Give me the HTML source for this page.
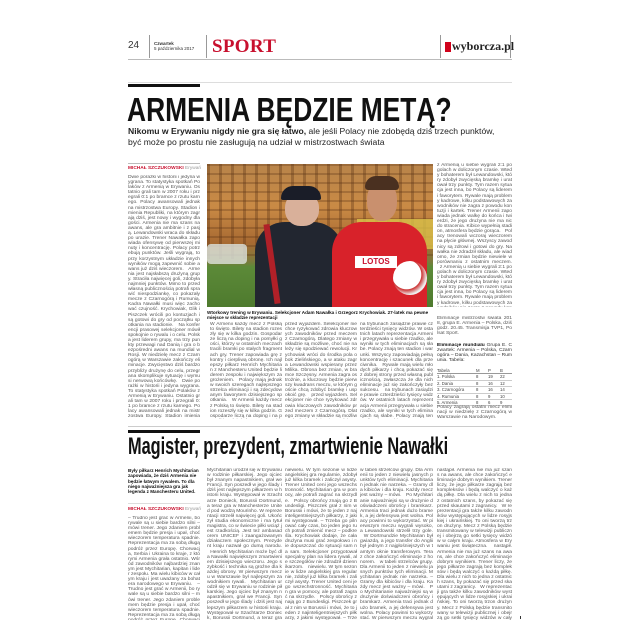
<!DOCTYPE html>
<html><head><meta charset="utf-8">
<style>
*{margin:0;padding:0;box-sizing:border-box}
body{width:640px;height:640px;background:#fff;position:relative;overflow:hidden;font-family:"Liberation Sans",sans-serif;color:#222}
.a{position:absolute}
.t{position:absolute;font-size:4.9px;line-height:5.1px;color:#555;overflow:hidden;text-align:justify;word-break:break-all}
.t b{color:#111}
.rule{position:absolute;background:#bbb;height:1px}
.vs{position:absolute;width:1px;background:#999}
</style></head><body>
<div class="a" style="left:128px;top:40px;font-size:10px;color:#333">24</div>
<div class="vs" style="left:149px;top:35px;height:23px"></div>
<div class="a" style="left:154px;top:41px;font-size:4.5px;line-height:5px;color:#333"><b>Czwartek</b><br>5 października 2017</div>
<div class="vs" style="left:206px;top:35px;height:23px"></div>
<div class="a" style="left:212px;top:36px;font-family:'Liberation Serif',serif;font-weight:bold;font-size:19px;color:#c8102e;letter-spacing:0.3px">SPORT</div>
<div class="vs" style="left:440px;top:35px;height:23px"></div>
<div class="a" style="left:445px;top:42px;width:6px;height:10px;background:#d0021b"></div>
<div class="a" style="left:452px;top:39px;font-family:'Liberation Serif',serif;font-weight:bold;font-size:12px;color:#222">wyborcza.pl</div>
<div class="vs" style="left:510px;top:35px;height:23px"></div>
<div class="rule" style="left:128px;top:59px;width:384px"></div>

<div class="rule" style="left:128px;top:82px;width:384px;background:#ddd"></div>
<div class="a" style="left:128px;top:84px;width:72px;height:3px;background:#111"></div>
<div class="a" style="left:127px;top:93px;white-space:nowrap;font-weight:bold;font-size:33px;line-height:33px;color:#111;transform:scaleX(0.8);transform-origin:left top">ARMENIA BĘDZIE METĄ?</div>
<div class="a" style="left:128px;top:126px;width:390px;font-size:8.6px;line-height:11px;color:#222;white-space:nowrap"><b>Nikomu w Erywaniu nigdy nie gra się łatwo,</b> ale jeśli Polacy nie zdobędą dziś trzech punktów,<br>być może po prostu nie zasługują na udział w mistrzostwach świata</div>

<div class="rule" style="left:128px;top:163px;width:72px"></div>
<div class="a" style="left:128px;top:166px;font-size:4.8px;font-weight:bold;color:#c8102e">MICHAŁ SZCZUKOWSKI <span style="color:#999;font-weight:normal">Erywań</span></div>
<div class="t r" style="left:128px;top:175px;width:72px;height:244px">Dwie porażki w historii i jedyna wygrana. To statystyka spotkań Polaków z Armenią w Erywaniu. Ostatnio grali tam w 2007 roku i przegrali 0:1 po bramce z rzutu karnego. Polacy awansowali jednak na mistrzostwa Europy. Stadion imienia Republiki, na którym zagrają dziś, jest nowy i wygodny dla gości. Armenia nie ma szans na awans, ale gra ambitnie i z pasją. Lewandowski wraca do składu po urazie. Trener Nawałka zapowiada ofensywę od pierwszej minuty i koncentrację. Polacy potrzebują punktów. Jeśli wygrają, to przy korzystnym układzie innych wyników mogą zapewnić sobie awans już dziś wieczorem. &nbsp;&nbsp;Armenia jest najsłabszą drużyną grupy. Straciła najwięcej goli, zdobyła najmniej punktów. Mimo to przed własną publicznością potrafi sprawić niespodziankę, co pokazały mecze z Czarnogórą i Rumunią. Kadra Nawałki musi więc zachować czujność. Krychowiak, Glik i Piszczek wrócili po kontuzjach i są gotowi do gry od początku spotkania na stadionie. &nbsp;&nbsp;Na konferencji prasowej selekcjoner mówił spokojnie o rywalu i o celu. Polska jest liderem grupy, ma trzy punkty przewagi nad Danią i gra o bezpośredni awans na mundial w Rosji. W niedzielę mecz z Czarnogórą w Warszawie zakończy eliminacje. Zwycięstwo dziś bardzo przybliży drużynę do celu, przegrana skomplikuje sytuację i wymusi nerwową końcówkę.</div>

<div class="a" style="left:207px;top:164px;width:226px;height:143px;overflow:hidden;background:linear-gradient(180deg,#b8844a 0%,#c98a45 30%,#a86a32 55%,#7c7a3c 68%,#5c8a38 72%,#4e7a2e 100%)">
  <div class="a" style="left:0;top:0;width:226px;height:95px;background:repeating-linear-gradient(90deg,rgba(90,50,20,.35) 0 3px,transparent 3px 12px),repeating-linear-gradient(180deg,rgba(90,50,20,.3) 0 2px,transparent 2px 9px)"></div>
  <div class="a" style="left:150px;top:55px;width:76px;height:30px;background:#d9c24a;opacity:.8"></div>
  <div class="a" style="left:0;top:80px;width:40px;height:20px;background:#dfe5e0;border-radius:4px;opacity:.8"></div>
  <div class="a" style="left:48px;top:58px;width:88px;height:90px;background:#222630;border-radius:30px 30px 0 0"></div>
  <div class="a" style="left:62px;top:60px;width:6px;height:80px;background:#b02028;transform:rotate(-8deg)"></div>
  <div class="a" style="left:78px;top:28px;width:34px;height:34px;background:#d9b09a;border-radius:45%"></div>
  <div class="a" style="left:74px;top:22px;width:40px;height:14px;background:#1a1d28;border-radius:12px 12px 2px 2px"></div>
  <div class="a" style="left:125px;top:58px;width:95px;height:90px;background:#d8222a;border-radius:30px 30px 0 0"></div>
  <div class="a" style="left:160px;top:17px;width:30px;height:40px;background:#c9906e;border-radius:45%"></div>
  <div class="a" style="left:158px;top:12px;width:34px;height:14px;background:#4a3020;border-radius:14px 14px 4px 4px"></div>
  <div class="a" style="left:148px;top:92px;width:42px;height:12px;background:#fff;font-size:8px;font-weight:bold;color:#c8102e;text-align:center;line-height:12px">LOTOS</div>
  <div class="a" style="left:186px;top:97px;width:34px;height:34px;background:radial-gradient(circle at 40% 40%,#fff 50%,#c33 52%,#eee 70%);border-radius:50%"></div>
</div>
<div class="a" style="left:207px;top:310px;width:226px;font-size:4.6px;line-height:5.2px;color:#111;font-weight:bold">Wtorkowy trening w Erywaniu. Selekcjoner Adam Nawałka i Grzegorz Krychowiak. 27-latek ma pewne miejsce w składzie reprezentacji</div>

<div class="t r" style="left:437px;top:163px;width:75px;height:144px">z Armenią u siebie wygrali 2:1 po golach w doliczonym czasie. Wtedy bohaterem był Lewandowski, który zdobył zwycięską bramkę i uratował trzy punkty. Tym razem sytuacja jest inna, bo Polacy są liderem i faworytem. Rywale mają problemy kadrowe, kilku podstawowych zawodników nie zagra z powodu kontuzji i kartek. Trener Armenii zapowiada jednak walkę do końca i twierdzi, że jego drużyna nie ma nic do stracenia. Kibice wypełnią stadion, atmosfera będzie gorąca. &nbsp;&nbsp;Polacy trenowali wczoraj wieczorem na płycie głównej. Wszyscy zawodnicy są zdrowi i gotowi do gry. Nawałka nie zdradził składu, ale wiadomo, że zmian będzie niewiele w porównaniu z ostatnim meczem.</div>
<div class="t" style="left:437px;top:316px;width:75px;height:22px;color:#555">Eliminacje mistrzostw świata 2018, grupa E. Armenia – Polska, dziś godz. 20.45. Transmisja TVP1, Polsat Sport.</div>
<div class="t" style="left:437px;top:343px;width:75px;height:22px;color:#333"><b>Eliminacje mundialu</b> Grupa E. Czwartek: Armenia – Polska, Czarnogóra – Dania, Kazachstan – Rumunia. Tabela:</div>
<div class="a" style="left:437px;top:368px;width:75px;font-size:4.3px;line-height:5.4px;color:#444">
<div style="display:flex;border-bottom:0.5px solid #999"><span style="flex:1">Tabela</span><span style="width:12px">M</span><span style="width:12px">P</span><span style="width:12px">B</span></div>
<div style="display:flex;border-bottom:0.5px solid #ccc"><span style="flex:1">1. Polska</span><span style="width:12px">8</span><span style="width:12px">19</span><span style="width:12px">22</span></div>
<div style="display:flex;border-bottom:0.5px solid #ccc"><span style="flex:1">2. Dania</span><span style="width:12px">8</span><span style="width:12px">16</span><span style="width:12px">12</span></div>
<div style="display:flex;border-bottom:0.5px solid #ccc"><span style="flex:1">3. Czarnogóra</span><span style="width:12px">8</span><span style="width:12px">16</span><span style="width:12px">14</span></div>
<div style="display:flex;border-bottom:0.5px solid #ccc"><span style="flex:1">4. Rumunia</span><span style="width:12px">8</span><span style="width:12px">9</span><span style="width:12px">10</span></div>
<div style="display:flex;border-bottom:0.5px solid #ccc"><span style="flex:1">5. Armenia</span><span style="width:12px">8</span><span style="width:12px">6</span><span style="width:12px">9</span></div>
</div>
<div class="t" style="left:437px;top:405px;width:75px;height:14px">Polacy zagrają ostatni mecz eliminacji w niedzielę z Czarnogórą w Warszawie na Narodowym.</div>

<div class="t r" style="left:210px;top:322px;width:72px;height:97px">W Armenii każdy mecz z Polską to święto. Bilety na stadion rozeszły się w kilka godzin. Gospodarze liczą na doping i na pomyłki gości, którzy w ostatnich meczach tracili bramki po stałych fragmentach gry. Trener zapowiada grę z kontry i cierpliwą obronę. Ich najlepszy piłkarz Henrich Mychitarian z Manchesteru United będzie liderem zespołu i największym zagrożeniem. &nbsp;&nbsp;Polacy mają jednak w swoich szeregach najlepszego strzelca eliminacji i są zdecydowanym faworytem dzisiejszego spotkania.</div>
<div class="t r" style="left:285px;top:322px;width:72px;height:97px">przed wyjazdem. Selekcjoner nie chce ryzykować zdrowia kluczowych zawodników przed meczem z Czarnogórą. Dlatego zmiany w składzie są możliwe, choć nie należy się spodziewać rewolucji. Krychowiak wróci do środka pola obok Zielińskiego, a w ataku zagra Lewandowski wspierany przez Milika. Obrona bez zmian, w bramce Szczęsny. Armenia zagra ostrożnie, a kluczowy będzie pierwszy kwadrans meczu, w którym goście chcą zdobyć bramkę i uspokoić grę.</div>
<div class="t r" style="left:360px;top:322px;width:73px;height:97px">na trybunach zasiądzie prawie czterdzieści tysięcy widzów. W ostatnich latach reprezentacja Armenii przegrywała u siebie rzadko, ale wyniki w tych eliminacjach są słabe. Polacy znają ten stadion i warunki. Wszyscy zapowiadają pełną koncentrację i szacunek dla przeciwnika. &nbsp;&nbsp;Rywale mają wielu młodych piłkarzy i chcą pokazać się z dobrej strony przed własną publicznością, zwłaszcza że dla nich eliminacje już się zakończyły bez sukcesu.</div>

<div class="rule" style="left:128px;top:426px;width:384px;background:#ccc"></div>
<div class="a" style="left:128px;top:430px;width:72px;height:3px;background:#111"></div>
<div class="a" style="left:128px;top:435px;white-space:nowrap;font-weight:bold;font-size:24px;line-height:24px;color:#111;transform:scaleX(0.68);transform-origin:left top">Magister, prezydent, zmartwienie Nawałki</div>

<div class="a" style="left:128px;top:468px;width:72px;font-size:4.6px;line-height:5.3px;color:#111;font-weight:bold">Były piłkarz Henrich Mychitarian zapowiada, że dziś Armenia nie będzie łatwym rywalem. To dla niego najważniejsza gra jak legenda z Manchesteru United.</div>
<div class="rule" style="left:128px;top:503px;width:72px;background:#ddd"></div>
<div class="a" style="left:128px;top:507px;font-size:4.8px;font-weight:bold;color:#c8102e">MICHAŁ SZCZUKOWSKI <span style="color:#999;font-weight:normal">Erywań</span></div>
<div class="t r" style="left:128px;top:516px;width:72px;height:104px">– Trudno jest grać w Armenii, bo rywale są u siebie bardzo silni – mówi trener. Jego zdaniem problemem będzie presja i upał, choć wieczorem temperatura spadnie. Reprezentacja ma za sobą długą podróż przez Europę. Chorwacja, Serbia i Ukraina to kraje, z którymi Armenia grała ostatnio. Wśród zawodników najbardziej znanym jest Mychitarian, kapitan i lider zespołu. Ma wielu kibiców w całym kraju i jest uważany za bohatera narodowego w Erywaniu.</div>
<div class="t r" style="left:207px;top:468px;width:75px;height:152px">Mychitarian urodził się w Erywaniu w rodzinie piłkarskiej. Jego ojciec był znanym napastnikiem, grał we Francji. Syn poszedł w jego ślady i dziś jest najlepszym piłkarzem w historii kraju. Występował w Szachtarze Donieck, Borussii Dortmund, a teraz gra w Manchesterze United pod wodzą Mourinho. W reprezentacji strzelił najwięcej goli. Ukończył studia ekonomiczne i ma tytuł magistra, co w świecie piłki wciąż jest rzadkością. Jest też ambasadorem UNICEF i zaangażowanym działaczem społecznym. Prezydent kraju nazwał go dumą narodu. &nbsp;&nbsp;Henrich Mychitarian może być dla Nawałki największym zmartwieniem dzisiejszego wieczoru. Jego szybkość i technika są groźne dla każdej obrony. W pierwszym meczu w Warszawie był najlepszym zawodnikiem rywali.</div>
<div class="t r" style="left:285px;top:468px;width:72px;height:152px">niewielu. W tym sezonie w lidze angielskiej gra regularnie, zdobył już kilka bramek i zaliczył asysty. Trener United ceni jego wszechstronność. Mychitarian gra w pomocy, ale potrafi zagrać na skrzydle. &nbsp;&nbsp;Polscy obrońcy znają go z Bundesligi. Piszczek grał z nim w Borussii i mówi, że to jeden z najinteligentniejszych piłkarzy, z jakimi występował. – Trzeba go pilnować cały czas, bo jeden jego ruch potrafi zmienić mecz – podkreśla. Krychowiak dodaje, że cała drużyna musi grać zespołowo i nie dopuszczać do sytuacji sam na sam. Selekcjoner przygotował specjalny plan na lidera rywali, ale szczegółów nie zdradził dziennikarzom.</div>
<div class="t r" style="left:360px;top:468px;width:73px;height:152px">w tabeli strzelców grupy. Dla Armenii to jeden z niewielu jasnych punktów tych eliminacji. Mychitarian jednak nie narzeka. – Gramy dla kibiców i dla kraju. Każdy mecz jest ważny – mówi. &nbsp;&nbsp;Po Mychitarianie najważniejsi są w drużynie doświadczeni obrońcy i bramkarz. Armenia traci jednak dużo bramek, a jej defensywa jest wolna. Polacy powinni to wykorzystać. W pierwszym meczu wygrali wysoko, a Lewandowski strzelił trzy gole. &nbsp;&nbsp;W Dortmundzie Mychitarian był gwiazdą, a jego transfer do Anglii był jednym z najgłośniejszych w tamtym oknie transferowym. Teraz chce zakończyć eliminacje z honorem.</div>
<div class="t r" style="left:437px;top:468px;width:75px;height:152px">nastąpił. Armenia nie ma już szans na awans, ale chce zakończyć eliminacje dobrym wynikiem. Trener liczy, że jego piłkarze zagrają bez kompleksów i będą walczyć o każdą piłkę. Dla wielu z nich to jedna z ostatnich szans, by pokazać się przed skautami z zagranicy. &nbsp;&nbsp;W reprezentacji gra także kilku zawodników występujących w lidze rosyjskiej i ukraińskiej. To oni tworzą trzon drużyny. Mecz z Polską będzie transmitowany w telewizji publicznej i obejrzą go setki tysięcy widzów w całym kraju. Atmosfera w Erywaniu jest świąteczna.</div>
<div class="a" style="left:520px;top:616px;width:1px;height:3px;background:#333"></div>
<script>document.querySelectorAll('.r').forEach(function(e){e.innerHTML=e.innerHTML+' &nbsp;&nbsp;'+e.innerHTML;});</script>
</body></html>
